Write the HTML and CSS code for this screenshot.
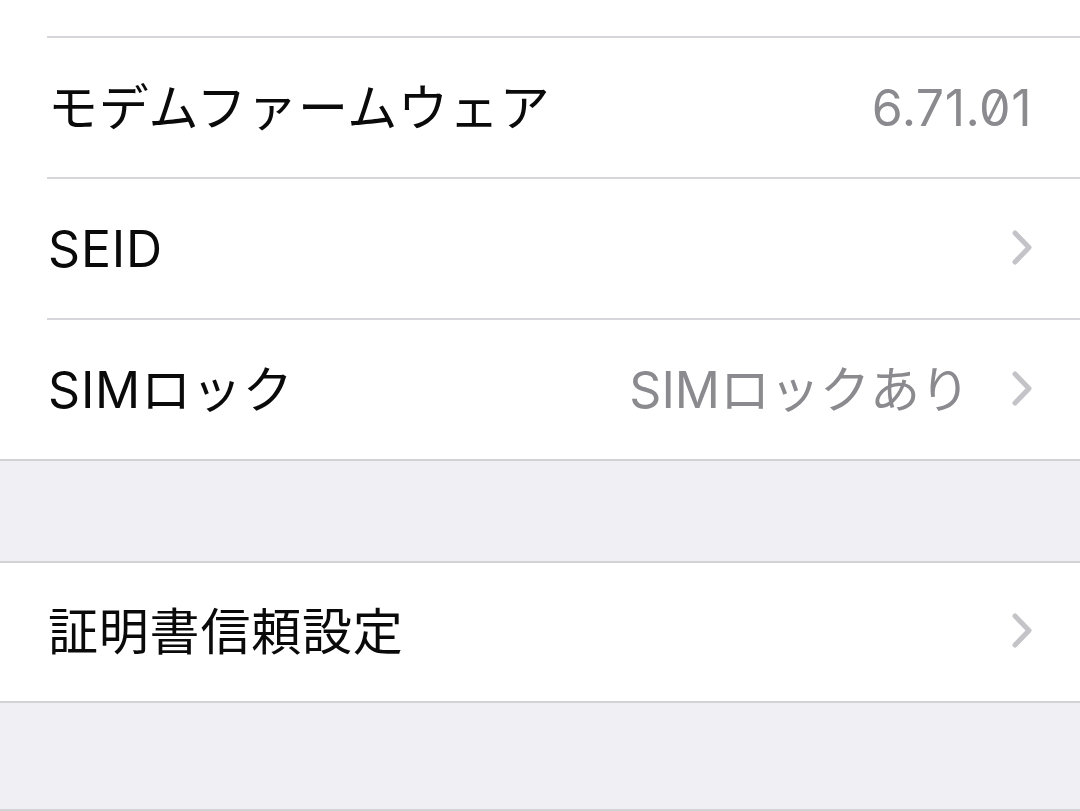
FILE: index.html
```html
<!DOCTYPE html>
<html lang="ja">
<head>
<meta charset="utf-8">
<link rel="stylesheet" href="styles.css">
</head>
<body>
<div class="screen">
  <section class="group group-top">
    <div class="tail"></div>
    <div class="row">
      <div class="cell">
        <span class="label">モデムファームウェア</span>
        <span class="value num">6.71.01</span>
      </div>
    </div>
    <div class="row">
      <div class="cell">
        <span class="label">SEID</span>
        <svg class="chev" viewBox="0 0 24 38" width="24" height="38"><path d="M5 4 L19 18.5 L5 33"/></svg>
      </div>
    </div>
    <div class="row">
      <div class="cell">
        <span class="label">SIMロック</span>
        <span class="value with-chev">SIMロックあり</span>
        <svg class="chev" viewBox="0 0 24 38" width="24" height="38"><path d="M5 4 L19 18.5 L5 33"/></svg>
      </div>
    </div>
  </section>
  <div class="spacer"></div>
  <section class="group">
    <div class="row first">
      <div class="cell">
        <span class="label">証明書信頼設定</span>
        <svg class="chev" viewBox="0 0 24 38" width="24" height="38"><path d="M5 4 L19 18.5 L5 33"/></svg>
      </div>
    </div>
  </section>
  <div class="spacer bottom"></div>
</div>
</body>
</html>
```
FILE: styles.css
```css
html, body {
  margin: 0;
  padding: 0;
  background: #efeff4;
}
.screen {
  width: 1080px;
  height: 811px;
  overflow: hidden;
  background: #efeff4;
  font-family: Inter, "Liberation Sans", "Noto Sans CJK JP", sans-serif;
  color: #0a0a0a;
}
.group {
  background: #ffffff;
  border-top: 2px solid #d2d2d6;
  border-bottom: 2px solid #d2d2d6;
}
.group-top {
  border-top: none;
}
.tail {
  height: 36px;
}
.row {
  padding-left: 47px;
}
.cell {
  display: flex;
  align-items: center;
  height: 139px;
  border-top: 2px solid #d6d6da;
  padding-right: 48px;
}
.row.first .cell {
  border-top: none;
  height: 138px;
}
.label {
  flex: 1;
  font-size: 50px;
  line-height: 1;
  padding-left: 1px;
  letter-spacing: 0.8px;
}
.value {
  font-size: 50px;
  line-height: 1;
  color: #8a8a8f;
}
.value.num {
  font-feature-settings: "zero" 1;
  letter-spacing: 0.5px;
}
.value.with-chev {
  margin-right: 40px;
}
.chev {
  display: block;
  margin-right: -2px;
  margin-top: -2px;
}
.chev path {
  fill: none;
  stroke: #c4c4c8;
  stroke-width: 5;
  stroke-linecap: round;
  stroke-linejoin: round;
}
.spacer {
  height: 100px;
}
.spacer.bottom {
  height: 106px;
  border-bottom: 2px solid #d2d2d6;
}
```
